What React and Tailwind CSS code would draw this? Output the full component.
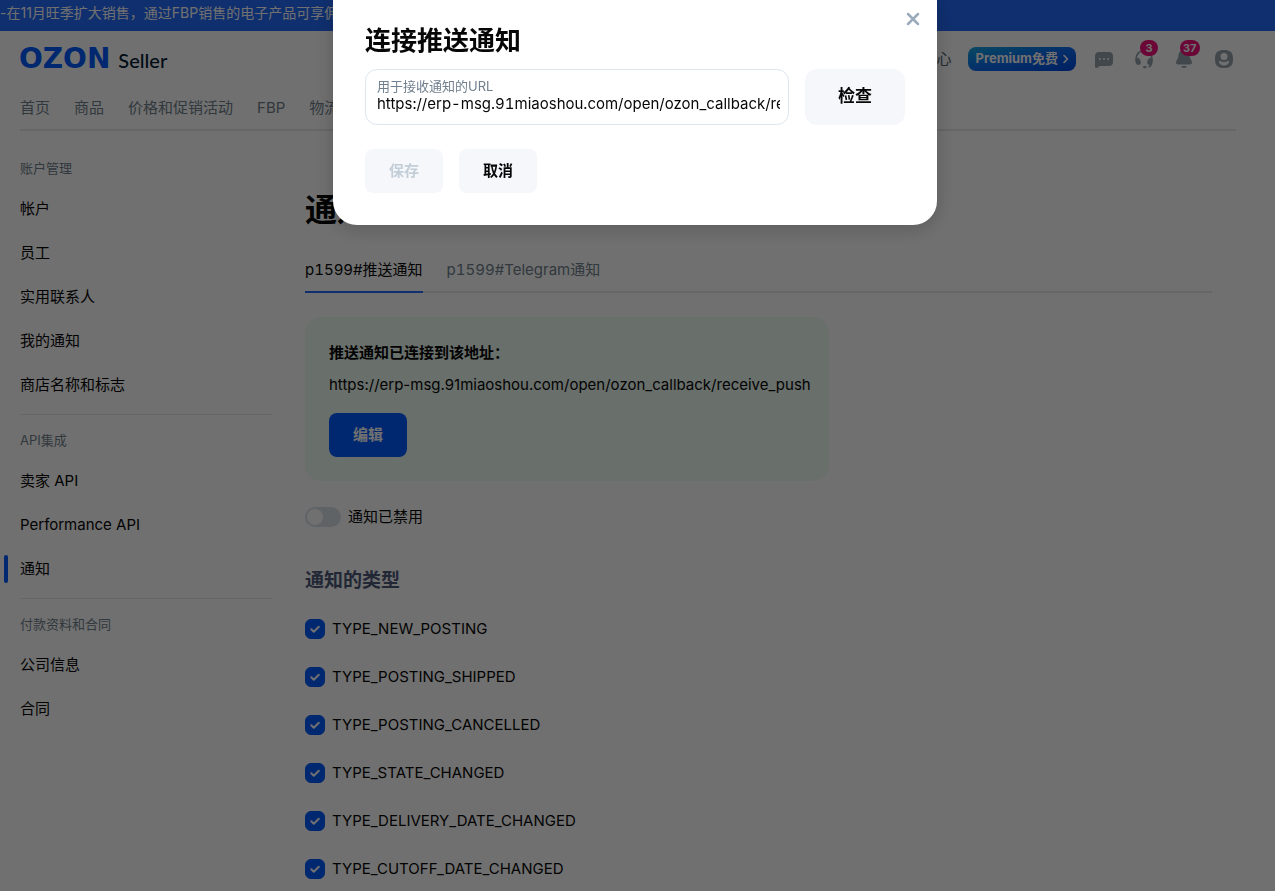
import React, { useState } from 'react';

const navItems = ['首页', '商品', '价格和促销活动', 'FBP', '物流'];

const menuSections = [
  { title: '账户管理', items: ['帐户', '员工', '实用联系人', '我的通知', '商店名称和标志'] },
  { title: 'API集成', items: ['卖家 API', 'Performance API', '通知'] },
  { title: '付款资料和合同', items: ['公司信息', '合同'] },
];

const tabs = ['p1599#推送通知', 'p1599#Telegram通知'];

const notificationTypes = [
  'TYPE_NEW_POSTING',
  'TYPE_POSTING_SHIPPED',
  'TYPE_POSTING_CANCELLED',
  'TYPE_STATE_CHANGED',
  'TYPE_DELIVERY_DATE_CHANGED',
  'TYPE_CUTOFF_DATE_CHANGED',
];

const CALLBACK_URL = 'https://erp-msg.91miaoshou.com/open/ozon_callback/receive_push';

const ChatIcon = () => (
  <svg viewBox="0 0 20 20" className="h-5 w-5" fill="currentColor" aria-hidden="true">
    <path
      fillRule="evenodd"
      d="M5 3h10a4 4 0 0 1 4 4v6a4 4 0 0 1-4 4H6.500C5 17 4 19 2.200 19 1.400 19 1 18.500 1 17.800V7a4 4 0 0 1 4-4Zm1 6a1 1 0 1 0 0 2 1 1 0 0 0 0-2Zm4 0a1 1 0 1 0 0 2 1 1 0 0 0 0-2Zm4 0a1 1 0 1 0 0 2 1 1 0 0 0 0-2Z"
    />
  </svg>
);

const HeadsetIcon = () => (
  <svg viewBox="0 0 20 20" className="h-5 w-5" fill="none" stroke="currentColor" aria-hidden="true">
    <path d="M2.200 11V9.500a7.800 7.800 0 0 1 15.600 0V11" strokeWidth="1.800" />
    <path d="M17.800 12c0 3.500-1.500 5.500-3.300 6" strokeWidth="1.600" />
    <rect x="1.500" y="9" width="5" height="7" rx="2.500" fill="currentColor" stroke="none" transform="rotate(-18 4 12.500)" />
    <rect x="13.500" y="9" width="5" height="7" rx="2.500" fill="currentColor" stroke="none" transform="rotate(18 16 12.500)" />
    <rect x="9" y="17" width="3.600" height="2.200" rx="1.100" fill="currentColor" stroke="none" />
  </svg>
);

const BellIcon = () => (
  <svg viewBox="0 0 20 20" className="h-5 w-5" fill="currentColor" aria-hidden="true">
    <path d="M10 1c3.400 0 5.500 2.500 5.500 5.500 0 3.200 2.500 4.500 2.500 7.300 0 1-.8 1.700-2 1.700H4c-1.200 0-2-.7-2-1.700 0-2.800 2.500-4.100 2.500-7.300C4.500 3.500 6.600 1 10 1Z" />
    <path d="M7 17h6c-.5 1.300-1.600 2-3 2s-2.500-.7-3-2Z" />
  </svg>
);

const UserIcon = () => (
  <svg viewBox="0 0 20 20" className="h-5 w-5" fill="currentColor" aria-hidden="true">
    <path
      fillRule="evenodd"
      d="M10 1c6.500 0 9 2.500 9 9s-2.500 9-9 9-9-2.500-9-9 2.500-9 9-9Zm0 3a3.500 3.500 0 1 0 0 7 3.500 3.500 0 0 0 0-7ZM4.800 12.800c.6 2.400 2.600 3.700 5.200 3.700s4.600-1.300 5.200-3.700c.2-.7-.4-1.200-1-.9-1.200.7-2.600 1.100-4.200 1.100s-3-.4-4.200-1.100c-.6-.3-1.200.2-1 .9Z"
    />
  </svg>
);

const IconButton = ({ label, badge, children }) => (
  <button type="button" aria-label={label} className="relative h-5 w-5 text-[#96a3ae]">
    {children}
    {badge && (
      <span className="absolute -top-[9px] left-1.5 flex h-4 min-w-[18px] items-center justify-center rounded-full bg-[#f1117e] px-[3px] text-[11px] leading-4 font-bold text-white">
        {badge}
      </span>
    )}
  </button>
);

const Header = () => (
  <header>
    <div className="h-[31px] bg-[#246bfa] text-sm leading-[26px] whitespace-nowrap text-white">
      -在11月旺季扩大销售，通过FBP销售的电子产品可享佣
    </div>
    <div className="mr-[39px] ml-5 border-b-2 border-[#e4e8ec] pb-0.5">
      <div className="flex h-14 items-center justify-between">
        <a href="#" className="flex items-baseline gap-2">
          <span className="-ml-px font-['DejaVu_Sans'] text-[28px] leading-8 font-bold text-[#005bff]">OZON</span>
          <span className="font-['Lato'] text-[20px] leading-8 font-medium text-[#001a34]">Seller</span>
        </a>
        <div className="flex items-center gap-[18px] pr-0.5">
          <div className="flex items-center gap-4">
            <a href="#" className="text-[15px] text-[#4d6175]">心</a>
            <button
              type="button"
              className="flex h-6 items-center gap-1 rounded-lg bg-linear-to-br from-[#1fa5e0] via-[#0f6bf0] to-[#0049e0] pr-1.5 pl-2 text-[13px] font-bold text-white"
            >
              Premium免费
              <svg viewBox="0 0 8 12" className="h-3 w-2" fill="none" stroke="currentColor" strokeWidth="1.600" aria-hidden="true">
                <path d="m2 2.500 3.500 3.500L2 9.500" strokeLinecap="round" strokeLinejoin="round" />
              </svg>
            </button>
          </div>
          <div className="flex items-center gap-5">
            <IconButton label="聊天"><ChatIcon /></IconButton>
            <IconButton label="支持" badge="3"><HeadsetIcon /></IconButton>
            <IconButton label="提醒" badge="37"><BellIcon /></IconButton>
            <IconButton label="个人资料"><UserIcon /></IconButton>
          </div>
        </div>
      </div>
      <nav className="flex h-10 items-center gap-6 pt-0.5 text-[15px] text-[#707f8d]">
        {navItems.map((item) => (
          <a key={item} href="#" className="whitespace-nowrap">{item}</a>
        ))}
      </nav>
    </div>
  </header>
);

const Sidebar = () => (
  <aside className="w-[252px] shrink-0">
    {menuSections.map((section, i) => (
      <section key={section.title} className={i > 0 ? 'mt-[7px] border-t border-[#e4e8ec] pt-2' : ''}>
        <h2 className="flex h-9 items-center text-[13px] text-[#707f8d]">{section.title}</h2>
        <ul>
          {section.items.map((item) => (
            <li key={item} className="relative">
              {item === '通知' && (
                <span className="absolute top-2 -left-4 h-7 w-1 rounded-xs bg-[#005bff]"></span>
              )}
              <a href="#" className="flex h-11 items-center text-[15px]">{item}</a>
            </li>
          ))}
        </ul>
      </section>
    ))}
  </aside>
);

const TypeCheckbox = ({ name }) => {
  const [checked, setChecked] = useState(true);

  return (
    <label className="flex w-fit items-center gap-[7px] text-[15px] leading-6">
      <span className="grid h-5 w-5">
        <input
          type="checkbox"
          checked={checked}
          onChange={() => setChecked(!checked)}
          className="col-start-1 row-start-1 h-5 w-5 appearance-none rounded-md border border-slate-300 checked:border-[#005bff] checked:bg-[#005bff]"
        />
        <svg viewBox="0 0 20 20" className="pointer-events-none col-start-1 row-start-1 h-5 w-5" fill="none" stroke="white" strokeWidth="2" aria-hidden="true">
          <path d="m6.300 10.300 2.500 2.500 5-5" strokeLinecap="round" strokeLinejoin="round" />
        </svg>
      </span>
      {name}
    </label>
  );
};

const Notifications = () => {
  const [enabled, setEnabled] = useState(false);

  return (
    <main className="min-w-0 flex-1 pt-[39px] pr-6">
      <h1 className="text-[32px] leading-10 font-bold">通知</h1>

      <div className="mt-5 flex gap-6 border-b-2 border-[#e4e8ec] text-[15px] tabular-nums">
        {tabs.map((tab, i) => (
          <button
            key={tab}
            type="button"
            className={`-mb-0.5 h-[43px] border-b-2 ${i === 0 ? 'border-[#246bfa]' : 'border-transparent text-[#707f8d]'}`}
          >
            {tab}
          </button>
        ))}
      </div>

      <div className="mt-6 w-fit rounded-2xl bg-[#eefcf3] py-6 pr-[18px] pl-6 text-[15px] leading-6">
        <p className="font-bold">推送通知已连接到该地址：</p>
        <p className="mt-2">{CALLBACK_URL}</p>
        <button type="button" className="mt-4 h-11 rounded-lg bg-[#005bff] px-6 font-bold text-white">编辑</button>
      </div>

      <label className="mt-6 flex w-fit items-center gap-[7px] text-[15px] leading-6">
        <input
          type="checkbox"
          role="switch"
          checked={enabled}
          onChange={() => setEnabled(!enabled)}
          className="h-5 w-9 appearance-none rounded-full bg-[#d9e1e9] p-0.5 before:block before:h-4 before:w-4 before:rounded-full before:bg-white checked:bg-[#005bff] checked:before:ml-4"
        />
        通知已禁用
      </label>

      <h2 className="mt-[38px] text-[19px] leading-7 font-bold text-[#4f5a7a]">通知的类型</h2>
      <div className="mt-[22px] flex flex-col gap-6">
        {notificationTypes.map((name) => (
          <TypeCheckbox key={name} name={name} />
        ))}
      </div>
    </main>
  );
};

const ConnectModal = () => {
  const [url, setUrl] = useState(CALLBACK_URL);

  return (
    <div className="fixed inset-0 flex items-start justify-center bg-black/56 pr-[5px]">
      <div
        role="dialog"
        aria-labelledby="modal-title"
        className="relative w-full max-w-[604px] rounded-b-3xl bg-white px-8 pt-[25px] pb-8 shadow-[0_4px_20px_rgba(0,0,0,0.2)]"
      >
        <button type="button" aria-label="关闭" className="absolute top-[11px] right-4 p-px text-[#9aabbb]">
          <svg viewBox="0 0 14 14" className="h-3.5 w-3.5" fill="none" stroke="currentColor" strokeWidth="2.500" aria-hidden="true">
            <path d="m2 2 10 10M12 2 2 12" strokeLinecap="round" />
          </svg>
        </button>

        <h2 id="modal-title" className="text-[26px] leading-8 font-bold">连接推送通知</h2>

        <div className="mt-3 flex gap-4">
          <div className="flex h-14 min-w-0 flex-1 flex-col rounded-xl border border-[#dde6ef] pt-2 pr-2 pl-[11px]">
            <label htmlFor="callback-url" className="text-[13px] leading-4 text-[#707f8d]">用于接收通知的URL</label>
            <input
              id="callback-url"
              type="text"
              value={url}
              onChange={(e) => setUrl(e.target.value)}
              className="h-5 text-[15px] leading-5 tabular-nums outline-none"
            />
          </div>
          <button type="button" className="h-14 w-[100px] rounded-xl bg-[#f5f7fa] text-[17px] font-bold">检查</button>
        </div>

        <div className="mt-6 flex gap-4 text-[15px] font-bold">
          <button type="button" disabled className="h-11 rounded-lg bg-[#f5f7fa] px-6 text-[#c3ced9]">保存</button>
          <button type="button" className="h-11 rounded-lg bg-[#f5f7fa] px-6">取消</button>
        </div>
      </div>
    </div>
  );
};

const App = () => {
  return (
    <div className="min-h-screen w-full bg-white font-['Inter','Noto_Sans_CJK_SC',sans-serif] text-[#070707]">
      <Header />
      <div className="mr-[39px] ml-5 flex gap-[33px] pt-5">
        <Sidebar />
        <Notifications />
      </div>
      <ConnectModal />
    </div>
  );
};

export default App;
